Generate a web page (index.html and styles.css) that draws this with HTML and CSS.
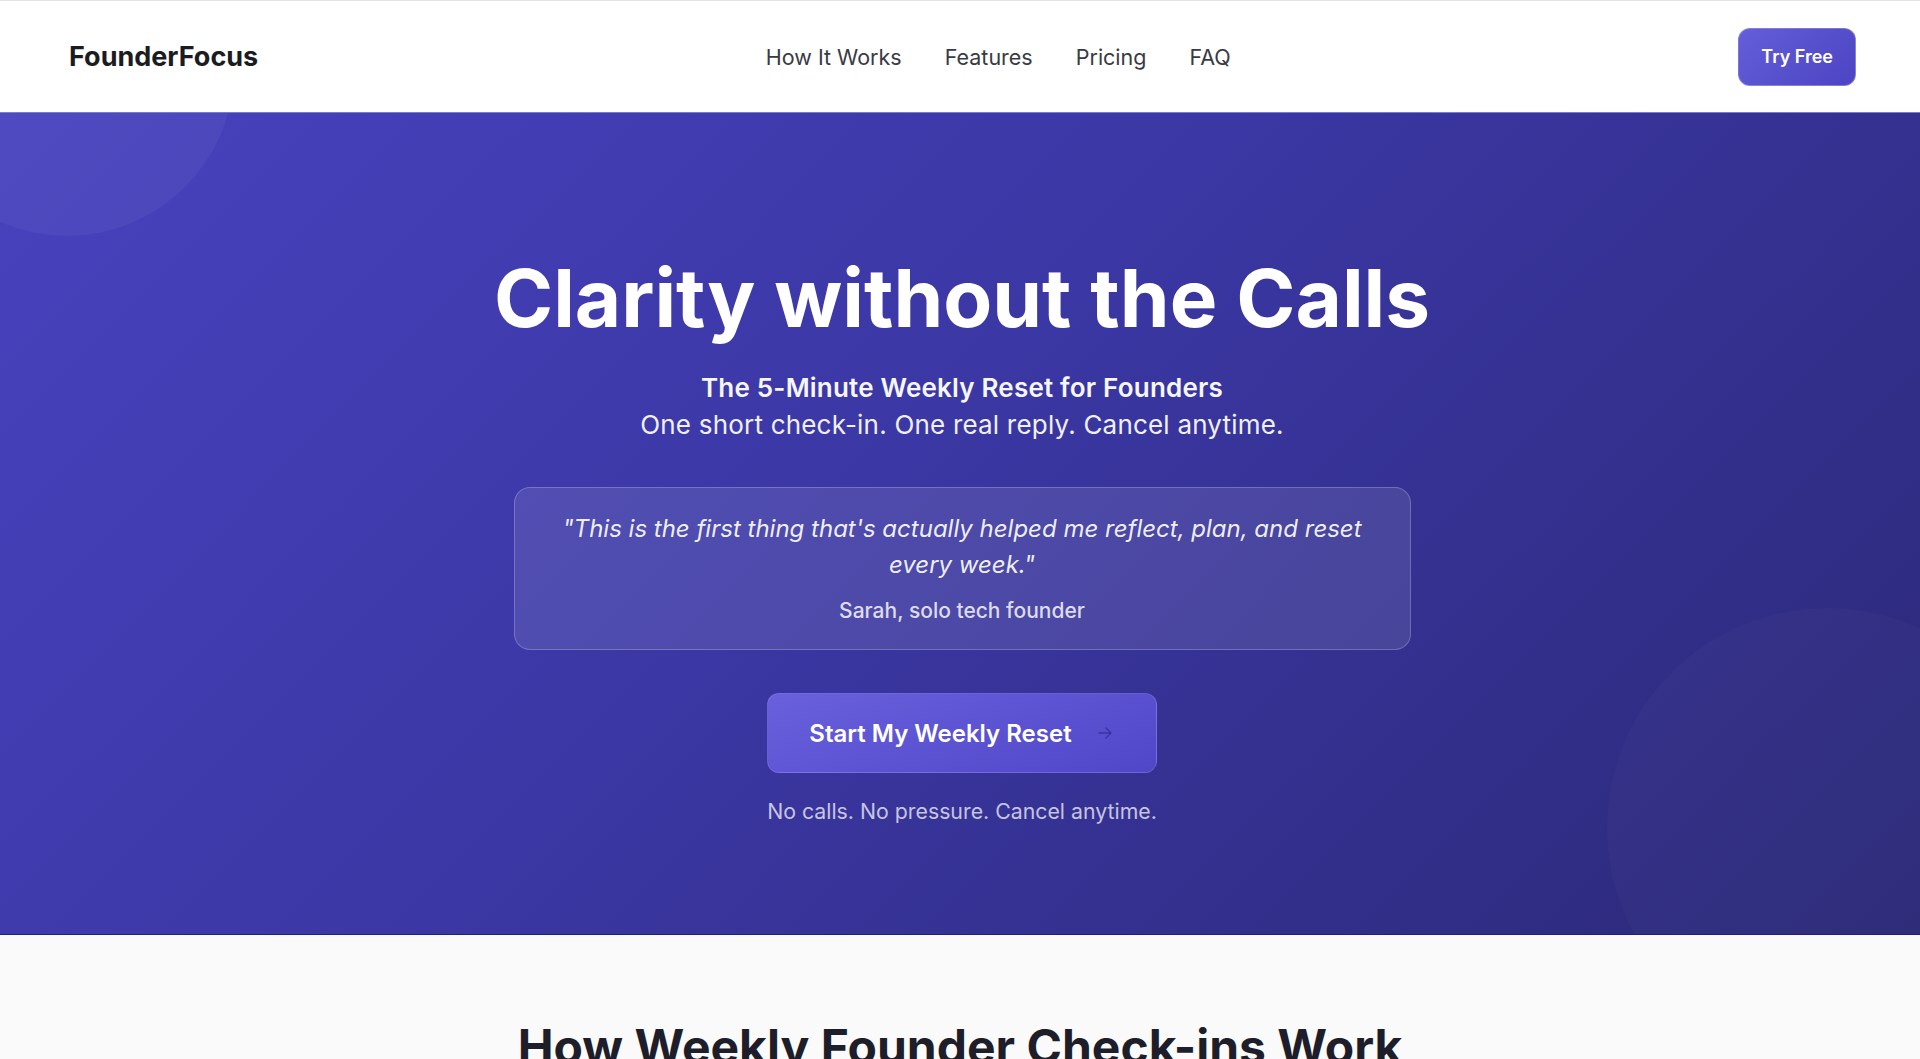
FILE: index.html
```html
<!DOCTYPE html>
<html lang="en">
<head>
  <meta charset="UTF-8">
  <title>FounderFocus - Weekly Founder Check-ins</title>
  <link rel="stylesheet" href="styles.css">
</head>
<body>
  <header class="site-header">
    <a href="#" class="logo">FounderFocus</a>
    <nav class="main-nav">
      <a href="#how">How It Works</a>
      <a href="#features">Features</a>
      <a href="#pricing">Pricing</a>
      <a href="#faq">FAQ</a>
    </nav>
    <a href="#start" class="btn btn-small">Try Free</a>
  </header>

  <section class="hero">
    <div class="hero-circle circle-tl"></div>
    <div class="hero-circle circle-br"></div>
    <div class="hero-inner">
      <h1>Clarity without the Calls</h1>
      <p class="hero-sub">
        <strong>The 5-Minute Weekly Reset for Founders</strong><br>
        One short check-in. One real reply. Cancel anytime.
      </p>

      <blockquote class="testimonial">
        <p>"This is the first thing that's actually helped me reflect, plan, and reset every week."</p>
        <cite>Sarah, solo tech founder</cite>
      </blockquote>

      <a href="#start" class="btn btn-cta">
        Start My Weekly Reset
        <svg class="arrow" width="16" height="16" viewBox="0 0 16 16" fill="none" stroke="currentColor" stroke-width="1.4" stroke-linecap="round" stroke-linejoin="round">
          <path d="M2 8h12M9 3l5 5-5 5"/>
        </svg>
      </a>
      <p class="hero-note">No calls. No pressure. Cancel anytime.</p>
    </div>
  </section>

  <section class="how" id="how">
    <h2>How Weekly Founder Check-ins Work</h2>
  </section>
</body>
</html>
```

FILE: styles.css
```css
* { box-sizing: border-box; }
body { margin: 0; font-family: "Inter", "Noto Sans", sans-serif; background: #fafafa; color: #1e1e2a; }
a { text-decoration: none; }

.site-header { height: 113px; display: flex; align-items: center; justify-content: space-between; padding: 0 64px 0 69px; background: #fff; border-top: 1px solid #e2e2e2; border-bottom: 1px solid #7d77d8; }
.logo { font-size: 27px; font-weight: 700; color: #1b1b22; }
.main-nav { display: flex; gap: 43px; }
.main-nav a { font-size: 21.5px; color: #3a3a44; }

.btn { color: #fff; font-weight: 600; background: linear-gradient(135deg, #645ed9 0%, #4c44c2 100%); border: 1px solid rgba(255, 255, 255, 0.25); }
.btn-small { display: inline-flex; align-items: center; height: 58px; padding: 0 22px; font-size: 18px; border-radius: 12px; }

.hero { position: relative; overflow: hidden; padding: 141px 0 108px; background: linear-gradient(135deg, #4842be 0%, #3b37a4 45%, #2b2978 100%); border-bottom: 1px solid #221f7a; text-align: center; color: #fff; }
.hero-circle { position: absolute; border-radius: 50%; }
.circle-tl { width: 334px; height: 334px; left: -100px; top: -211px; background: rgba(255, 255, 255, 0.045); }
.circle-br { width: 440px; height: 440px; right: -127px; bottom: -114px; background: rgba(255, 255, 255, 0.018); }
.hero-inner { position: relative; display: flex; flex-direction: column; align-items: center; padding-left: 4px; }

.hero h1 { margin: 0; font-size: 80px; line-height: 1.1; font-weight: 700; }
.hero-sub { margin: 27px 0 0; font-size: 26px; line-height: 37px; letter-spacing: 0.2px; color: #f0f0fc; }
.hero-sub strong { font-weight: 600; color: #f6f6ff; }

.testimonial { width: 897px; margin: 44px 0 0; padding: 23px 40px 24px; background: rgba(255, 255, 255, 0.1); border: 1px solid rgba(255, 255, 255, 0.22); border-radius: 16px; }
.testimonial p { margin: 0; font-size: 24px; line-height: 36px; font-style: italic; color: rgba(255, 255, 255, 0.93); }
.testimonial cite { display: block; margin-top: 14px; font-size: 21px; line-height: 28px; font-style: normal; font-weight: 500; color: rgba(255, 255, 255, 0.82); }

.btn-cta { display: inline-flex; align-items: center; gap: 25px; height: 80px; margin-top: 43px; padding: 0 43px 0 41px; font-size: 24px; border-radius: 12px; background: linear-gradient(160deg, #6860dc 0%, #4f47c8 100%); border-color: rgba(255, 255, 255, 0.12); }
.arrow { color: rgba(40, 34, 130, 0.6); }
.hero-note { margin: 23px 0 0; font-size: 21.3px; line-height: 30px; color: rgba(255, 255, 255, 0.72); }

.how { padding: 83px 0 80px; text-align: center; }
.how h2 { margin: 0; font-size: 48px; line-height: 1.2; font-weight: 700; color: #1e1e2a; }
```
